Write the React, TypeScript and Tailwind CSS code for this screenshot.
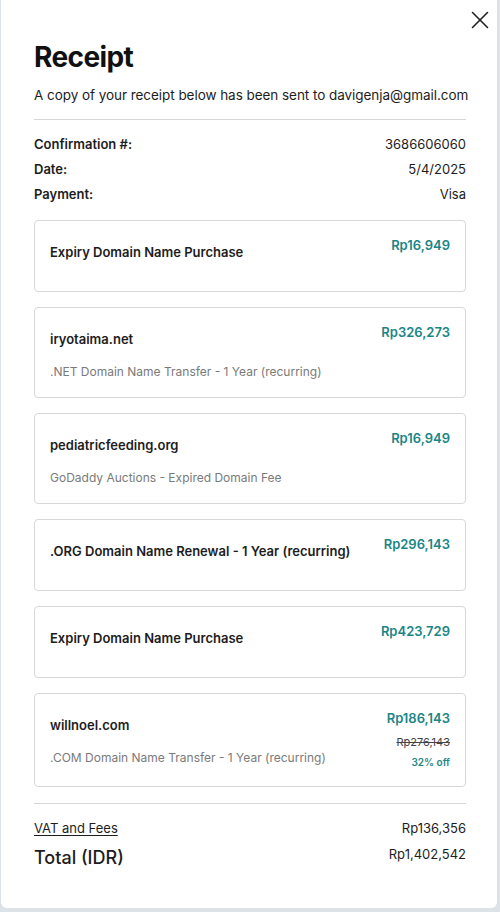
import { X } from "lucide-react";

type Item = {
  title: string;
  sub?: string;
  price: string;
  was?: string;
  off?: string;
};

const items: Item[] = [
  { title: "Expiry Domain Name Purchase", price: "Rp16,949" },
  { title: "iryotaima.net", sub: ".NET Domain Name Transfer - 1 Year (recurring)", price: "Rp326,273" },
  { title: "pediatricfeeding.org", sub: "GoDaddy Auctions - Expired Domain Fee", price: "Rp16,949" },
  { title: ".ORG Domain Name Renewal - 1 Year (recurring)", price: "Rp296,143" },
  { title: "Expiry Domain Name Purchase", price: "Rp423,729" },
  {
    title: "willnoel.com",
    sub: ".COM Domain Name Transfer - 1 Year (recurring)",
    price: "Rp186,143",
    was: "Rp276,143",
    off: "32% off",
  },
];

const details = [
  ["Confirmation #:", "3686606060"],
  ["Date:", "5/4/2025"],
  ["Payment:", "Visa"],
];

function LineItem({ item }: { item: Item }) {
  return (
    <div className="flex min-h-[72px] items-start justify-between rounded-[4px] border border-[#d8d8d8] px-[15px] pt-[16px] pb-[17px]">
      <div className="flex flex-col">
        <div className="mt-[7px] text-[13px] leading-[16px] font-semibold text-[#1d1d1d]">{item.title}</div>
        {item.sub && (
          <div className="mt-[17px] text-[12px] leading-[16px] text-[#7a7a7a]">{item.sub}</div>
        )}
      </div>
      <div className="flex flex-col items-end">
        <div className="text-[13px] leading-[16px] font-semibold text-[#1b8686]">{item.price}</div>
        {item.was && (
          <div className="mt-[9px] text-[11px] leading-[14px] text-[#444] line-through">{item.was}</div>
        )}
        {item.off && (
          <div className="mt-[6px] text-[10px] leading-[14px] font-semibold text-[#1b8686]">{item.off}</div>
        )}
      </div>
    </div>
  );
}

export default function App() {
  return (
    <div
      className="h-[912px] w-[500px] bg-[#dde2e8] pl-[1px] pr-[3px] pb-[4px]"
      style={{ fontFamily: "Inter, 'Noto Sans', sans-serif" }}
    >
      <div className="relative h-full rounded-b-[6px] bg-white pt-[40px] pr-[31px] pl-[33px]">
        {/* close button */}
        <button className="absolute top-[5px] right-[2px] text-[#222]">
          <X size={30} strokeWidth={1.25} />
        </button>

        <h1 className="text-[28px] leading-[34px] font-bold tracking-[-0.6px] text-[#111]">Receipt</h1>
        <p className="mt-[11px] whitespace-nowrap text-[13.5px] leading-[20px] tracking-[-0.05px] text-[#1d1d1d]">
          A copy of your receipt below has been sent to davigenja@gmail.com
        </p>

        <hr className="mt-[14px] border-[#d6d6d6]" />

        <div className="mt-[12px]">
          {details.map(([label, value]) => (
            <div key={label} className="flex h-[25px] items-center justify-between text-[13px] text-[#1d1d1d]">
              <span className="font-semibold">{label}</span>
              <span>{value}</span>
            </div>
          ))}
        </div>

        <div className="mt-[13px] flex flex-col gap-[15px]">
          {items.map((item, i) => (
            <LineItem key={i} item={item} />
          ))}
        </div>

        <hr className="mt-[16px] border-[#d6d6d6]" />

        <div className="mt-[15px] flex h-[20px] items-center justify-between text-[13px] text-[#1d1d1d]">
          <span className="underline underline-offset-2">VAT and Fees</span>
          <span>Rp136,356</span>
        </div>
        <div className="mt-[5px] flex items-start justify-between text-[#1d1d1d]">
          <span className="text-[18px] leading-[28px] font-medium">Total (IDR)</span>
          <span className="text-[13px] leading-[20px]">Rp1,402,542</span>
        </div>
      </div>
    </div>
  );
}
